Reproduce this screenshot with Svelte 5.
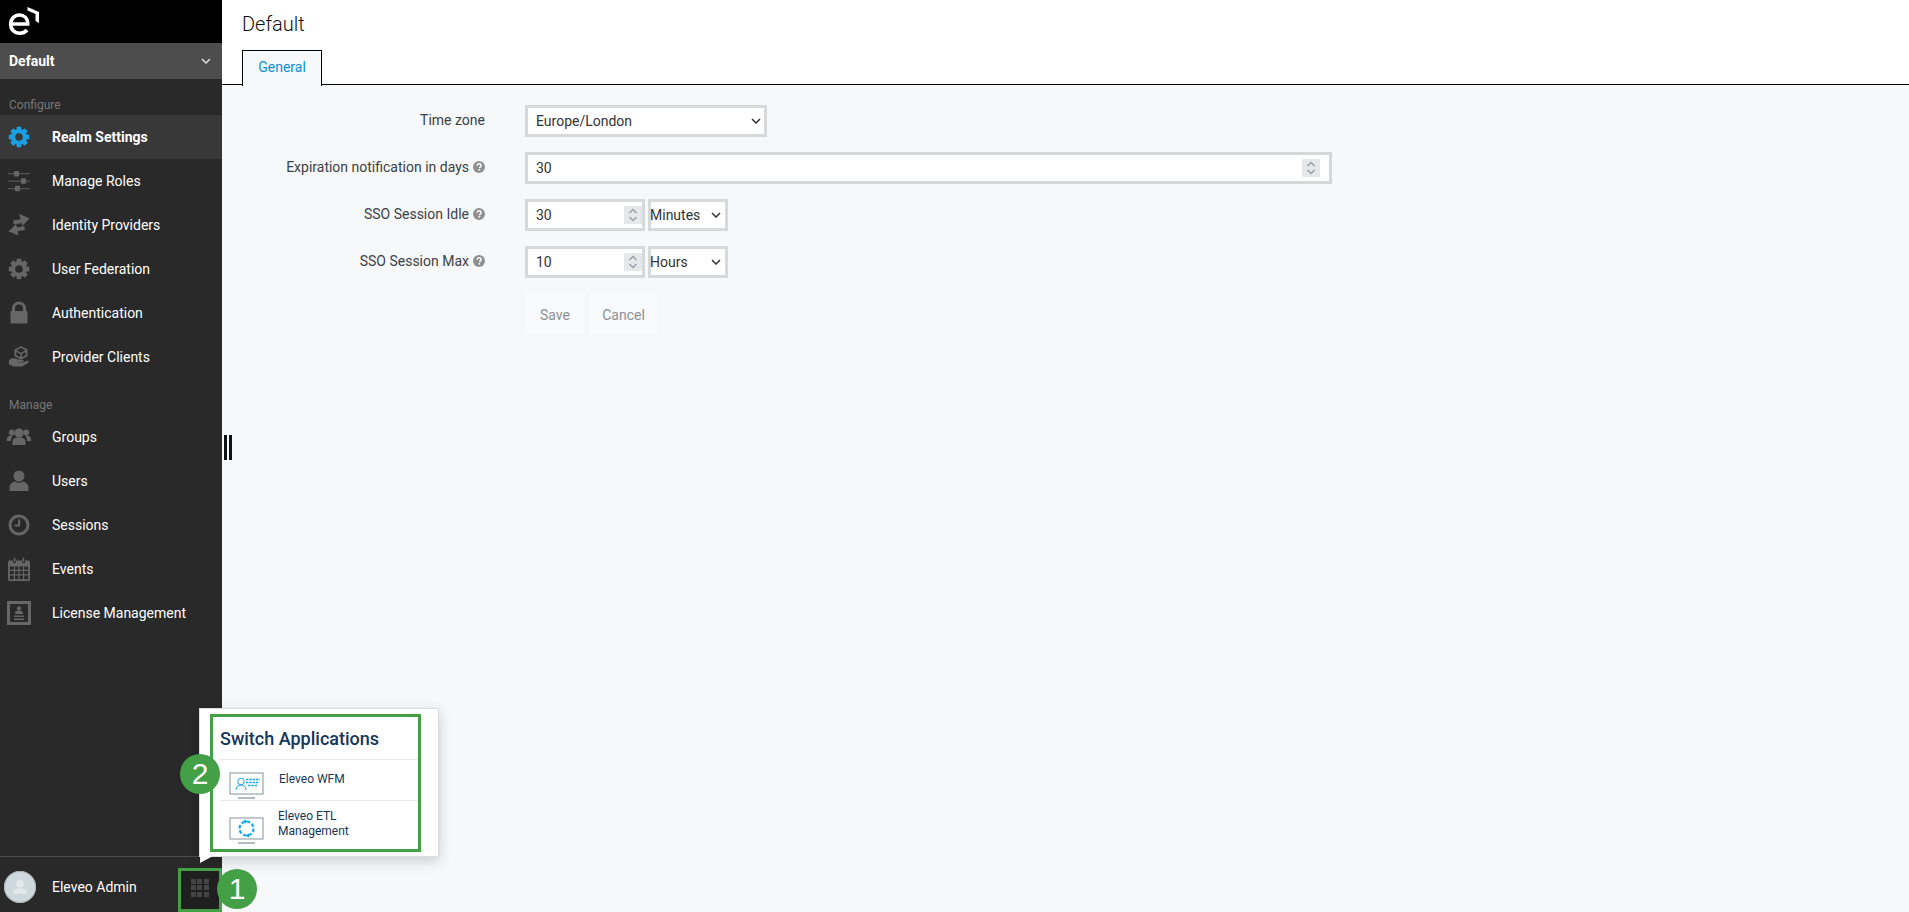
<script lang="ts">
	const gearTeeth = [0, 45, 90, 135, 180, 225, 270, 315];

	const configureItems = [
		{ label: 'Realm Settings', icon: 'gear', active: true },
		{ label: 'Manage Roles', icon: 'sliders' },
		{ label: 'Identity Providers', icon: 'arrows' },
		{ label: 'User Federation', icon: 'gear' },
		{ label: 'Authentication', icon: 'lock' },
		{ label: 'Provider Clients', icon: 'box' }
	];

	const manageItems = [
		{ label: 'Groups', icon: 'group' },
		{ label: 'Users', icon: 'user' },
		{ label: 'Sessions', icon: 'clock' },
		{ label: 'Events', icon: 'calendar' },
		{ label: 'License Management', icon: 'license' }
	];
</script>

{#snippet navIcon(name)}
	<svg class="nav-icon" viewBox="0 0 24 24" fill="currentColor">
		{#if name === 'gear'}
			{#each gearTeeth as deg}
				<rect x="9.6" y="1.8" width="4.8" height="5" rx="1" transform="rotate({deg} 12 12)" />
			{/each}
			<circle cx="12" cy="12" r="5.8" fill="none" stroke="currentColor" stroke-width="4" />
		{:else if name === 'sliders'}
			<path d="M1 4h22v1.2H1zM1 11.500h22v1.200H1zM1 19h22v1.200H1z" opacity="0.7" />
			<rect x="7" y="2" width="5" height="5.500" rx="1" />
			<rect x="14" y="9.300" width="5" height="5.500" rx="1" />
			<rect x="8" y="16.800" width="5" height="5.500" rx="1" />
		{:else if name === 'arrows'}
			<path d="M14 1l9.500 6.500-8.500 6V10.500H7V6.500h7.500zM9.500 10.500v3.500h7.500v4h-7.500v4L.5 16.500z" transform="rotate(-10 12 12)" />
		{:else if name === 'lock'}
			<path d="M5 10V7.500a7 7 0 0 1 14 0V10h1.500v12.500h-17V10zM8 10h8V7.500a4 4 0 0 0-8 0z" />
		{:else if name === 'box'}
			<path d="M14 1l6.500 3.500v6.700L14 14.500l-6.500-3.300V4.500zM9.500 5.300l4.500 2.400 4.500-2.400L14 3zM14.800 9v3.300l3.900-2V7zM13.200 9L9.300 7v3.300l3.900 2z" />
			<path d="M2 15c3-2.500 6-2.200 9-.5h4.500c1.500 0 1.500 2.500 0 2.500H11v.6h5l4-1.800c1.700-.5 2.300 1.300 1 2.200l-6 3.500H7l-5-2z" />
		{:else if name === 'group'}
			<circle cx="12" cy="8" r="4.600" />
			<circle cx="4.800" cy="7.500" r="3" />
			<circle cx="19.200" cy="7.500" r="3" />
			<path d="M5.500 20v-3.500c0-2.600 2.500-4 6.500-4s6.500 1.400 6.500 4V20zM0 16v-2c0-2 1.600-3.400 4.500-3.400 1 0 1.500.2 1.500.2-1.300 1-2 2.400-2 5.200zM24 16v-2c0-2-1.600-3.400-4.500-3.400-1 0-1.500.2-1.500.2 1.300 1 2 2.400 2 5.200z" />
		{:else if name === 'user'}
			<circle cx="12" cy="7" r="5.500" />
			<path d="M2.500 22v-3.500c0-3.500 3-5.500 5.500-6 2.500 1.800 5.500 1.800 8 0 2.500.5 5.500 2.500 5.500 6V22z" />
		{:else if name === 'clock'}
			<circle cx="12" cy="12" r="9" fill="none" stroke="currentColor" stroke-width="3" />
			<path d="M11 6.500h2.200v7H7.500v-2H11z" />
		{:else if name === 'calendar'}
			<path d="M2.500 3.500H6v2.500h3V3.500h6v2.500h3V3.500h3.500A1.500 1.500 0 0 1 23 5V22.500a1.500 1.500 0 0 1-1.500 1.500h-19A1.500 1.500 0 0 1 1 22.500V5A1.500 1.500 0 0 1 2.500 3.500zM2.800 9.500v3.200h4v-3.200zM8 9.500v3.200h3.400v-3.200zM12.600 9.500v3.200h3.400v-3.200zM17.200 9.500v3.200h4v-3.200zM2.800 14v3.200h4V14zM8 14v3.200h3.400V14zM12.600 14v3.200h3.400V14zM17.200 14v3.200h4V14zM2.800 18.500v3.700h4v-3.700zM8 18.500v3.700h3.400v-3.700zM12.600 18.500v3.700h3.400v-3.700zM17.200 18.500v3.700h4v-3.700z" fill-rule="evenodd" />
			<rect x="6.800" y="0.500" width="1.600" height="4.800" rx="0.800" />
			<rect x="15.600" y="0.500" width="1.600" height="4.800" rx="0.800" />
		{:else if name === 'license'}
			<path d="M0 0h24v24H0zM3 3v18h18V3z" fill-rule="evenodd" />
			<circle cx="12" cy="7.500" r="2.200" />
			<path d="M8 13v-1.500c0-1 1.500-1.800 4-1.800s4 .8 4 1.800V13zM7 14.500h10V16H7zM7 17.500h10V19H7z" />
		{/if}
	</svg>
{/snippet}

{#snippet helpIcon()}
	<svg class="help" viewBox="0 0 12 12">
		<circle cx="6" cy="6" r="6" fill="#8f8f8f" />
		<path d="M4 4.700C4.100 3.500 5 2.800 6 2.800s2.100.7 2.100 1.900c0 1.400-1.600 1.400-1.600 2.500" fill="none" stroke="#fff" stroke-width="1.400" />
		<rect x="5.500" y="8.100" width="1.700" height="1.500" fill="#fff" />
	</svg>
{/snippet}

{#snippet chevron()}
	<svg class="chevron" viewBox="0 0 10 6">
		<path d="M1 1l4 4 4-4" fill="none" stroke="#333" stroke-width="1.500" />
	</svg>
{/snippet}

{#snippet stepper()}
	<span class="stepper">
		<svg viewBox="0 0 12 16" width="12" height="16">
			<path d="M2.500 6L6 2.500 9.500 6M2.500 10L6 13.500 9.500 10" fill="none" stroke="#9a9da3" stroke-width="1.400" />
		</svg>
	</span>
{/snippet}

<div class="page">
	<aside class="sidebar">
		<div class="logo-bar">
			<svg class="logo" viewBox="0 0 40 36" width="40" height="36">
				<path d="M9.500 24h17.200c0-5.800-3.800-9-8.200-9-4.900 0-8.800 3.900-8.800 9.200s3.900 9 9 9c3.200 0 5.600-1.200 7.300-3.200" fill="none" stroke="#fff" stroke-width="3.600" />
				<path d="M26.500 7l11.500 5v11l-3.500-2v-7L26.500 10.500z" fill="#fff" />
			</svg>
		</div>
		<div class="realm-select">
			<span>Default</span>
			<svg viewBox="0 0 10 6" width="10" height="6">
				<path d="M1 1l4 4 4-4" fill="none" stroke="#ddd" stroke-width="1.500" />
			</svg>
		</div>

		<div class="nav-title first">Configure</div>
		<nav>
			{#each configureItems as item}
				<div class="nav-item" class:active={item.active}>
					<span class="icon-slot">{@render navIcon(item.icon)}</span>
					<span>{item.label}</span>
				</div>
			{/each}
		</nav>

		<div class="nav-title second">Manage</div>
		<nav>
			{#each manageItems as item}
				<div class="nav-item">
					<span class="icon-slot">{@render navIcon(item.icon)}</span>
					<span>{item.label}</span>
				</div>
			{/each}
		</nav>

		<div class="user-bar">
			<div class="avatar">
				<svg viewBox="0 0 24 24" width="20" height="20" fill="#e4e9ec">
					<circle cx="12" cy="8" r="4.500" />
					<path d="M4 20v-2c0-3 3-4.500 8-4.500s8 1.500 8 4.500v2z" />
				</svg>
			</div>
			<span class="user-name">Eleveo Admin</span>
			<div class="grid-button">
				<div class="dots">
					{#each Array(9) as _}
						<i></i>
					{/each}
				</div>
			</div>
		</div>
	</aside>

	<main class="content">
		<header class="content-head">
			<h1>Default</h1>
			<div class="tabs">
				<div class="tab">General</div>
			</div>
		</header>

		<form class="settings">
			<label for="tz">Time zone</label>
			<div class="field">
				<div class="box w-242">
					<span id="tz" class="value">Europe/London</span>
					{@render chevron()}
				</div>
			</div>

			<label for="exp">Expiration notification in days {@render helpIcon()}</label>
			<div class="field">
				<div class="box wide">
					<span id="exp" class="value">30</span>
					{@render stepper()}
				</div>
			</div>

			<label for="idle">SSO Session Idle {@render helpIcon()}</label>
			<div class="field">
				<div class="box w-120">
					<span id="idle" class="value">30</span>
					{@render stepper()}
				</div>
				<div class="box w-80 unit">
					<span class="value">Minutes</span>
					{@render chevron()}
				</div>
			</div>

			<label for="max">SSO Session Max {@render helpIcon()}</label>
			<div class="field">
				<div class="box w-120">
					<span id="max" class="value">10</span>
					{@render stepper()}
				</div>
				<div class="box w-80 unit">
					<span class="value">Hours</span>
					{@render chevron()}
				</div>
			</div>

			<div class="actions">
				<button type="button" class="save">Save</button>
				<button type="button" class="cancel">Cancel</button>
			</div>
		</form>
	</main>

	<div class="resize-handle"></div>

	<div class="popup">
		<div class="popup-inner">
			<h2>Switch Applications</h2>
			<div class="app-row wfm">
				<svg class="monitor" viewBox="0 0 36 28" width="36" height="28">
					<rect x="1" y="1" width="33" height="21" fill="#fff" stroke="#9aa5ab" stroke-width="1.200" />
					<path d="M9 26h17" stroke="#9aa5ab" stroke-width="1.500" />
					<circle cx="12" cy="9.500" r="3.300" fill="none" stroke="#19a7e8" stroke-width="1" />
					<path d="M7 18c.5-3.500 2-5 5-5s4.500 1.500 5 5" fill="none" stroke="#19a7e8" stroke-width="1" />
					<path d="M17 7.500h14M17 10.500h13M19 13.500h9" stroke="#19a7e8" stroke-width="1.300" stroke-dasharray="2.500 0.800" />
				</svg>
				<span>Eleveo WFM</span>
			</div>
			<div class="app-row etl">
				<svg class="monitor" viewBox="0 0 36 28" width="36" height="28">
					<rect x="1" y="1" width="33" height="21" fill="#fff" stroke="#9aa5ab" stroke-width="1.200" />
					<path d="M9 26h17" stroke="#9aa5ab" stroke-width="1.500" />
					<circle cx="17.500" cy="11.500" r="7" fill="none" stroke="#19a7e8" stroke-width="2.200" stroke-dasharray="3.500 2" />
					<path d="M15 2.500l4 2-4 2zM20 16.500l-4 2 4 2z" fill="#19a7e8" />
				</svg>
				<span>Eleveo ETL<br />Management</span>
			</div>
		</div>
		<div class="popup-arrow"></div>
	</div>

	<div class="marker marker-grid"></div>
	<div class="badge badge-one">1</div>
	<div class="badge badge-two">2</div>
</div>

<style>
	:global(body) {
		font-family: Roboto, 'Liberation Sans', sans-serif;
		overflow: hidden;
	}

	.page {
		position: relative;
		display: flex;
		height: 912px;
		background: #f7f8fa;
		color: #333;
	}

	.sidebar {
		width: 222px;
		flex: none;
		display: flex;
		flex-direction: column;
		background: #292929;
		color: #fff;
		font-size: 14px;
	}

	.logo-bar {
		height: 43px;
		background: #000;
		overflow: hidden;
	}

	.logo {
		display: block;
		margin-left: 1px;
	}

	.realm-select {
		height: 36px;
		display: flex;
		align-items: center;
		justify-content: space-between;
		padding: 0 11px 0 9px;
		background: #4d4d4d;
		font-weight: 700;
	}

	.nav-title {
		padding-left: 9px;
		font-size: 12px;
		line-height: 14px;
		color: #777;
	}

	.nav-title.first {
		margin-top: 19px;
		margin-bottom: 3px;
	}

	.nav-title.second {
		margin-top: 19px;
		margin-bottom: 3px;
	}

	.nav-item {
		height: 44px;
		display: flex;
		align-items: center;
		color: #fff;
	}

	.nav-item.active {
		background: #383838;
		font-weight: 700;
	}

	.icon-slot {
		width: 52px;
		flex: none;
		display: flex;
		padding-left: 7px;
		box-sizing: border-box;
		color: #666;
	}

	.active .icon-slot {
		color: #1b9fe0;
	}

	.nav-icon {
		width: 24px;
		height: 24px;
	}

	.user-bar {
		margin-top: auto;
		height: 56px;
		box-sizing: border-box;
		display: flex;
		align-items: center;
		border-top: 1px solid #4a4a4a;
		padding: 5px 0 0 4px;
	}

	.avatar {
		width: 32px;
		height: 32px;
		flex: none;
		display: flex;
		align-items: center;
		justify-content: center;
		border-radius: 50%;
		background: #cfd8dc;
		box-shadow: inset 0 0 0 1px #aab2b6;
	}

	.user-name {
		margin-left: 16px;
		font-size: 14px;
	}

	.grid-button {
		margin-left: auto;
		align-self: flex-end;
		width: 44px;
		height: 44px;
		display: flex;
		align-items: center;
		justify-content: center;
		background: #1f1f1f;
	}

	.dots {
		display: grid;
		grid-template-columns: repeat(3, 5px);
		gap: 1.500px;
		margin-right: 1px;
		margin-bottom: 5px;
	}

	.dots i {
		display: block;
		width: 5px;
		height: 5px;
		background: #444;
	}

	.content {
		flex: 1;
		min-width: 0;
	}

	.content-head {
		height: 84px;
		background: #fff;
		border-bottom: 1px solid #000;
		box-sizing: content-box;
		padding-left: 20px;
		position: relative;
	}

	h1 {
		margin: 0;
		padding-top: 11px;
		font-size: 20px;
		line-height: 26px;
		font-weight: 300;
		color: #111;
	}

	.tabs {
		display: flex;
		margin-top: 13px;
	}

	.tab {
		width: 78px;
		border: 1px solid #000;
		border-bottom: 0;
		background: #f7f8fa;
		color: #0d8fd6;
		font-size: 14px;
		line-height: 33px;
		text-align: center;
		position: relative;
		z-index: 1;
		margin-bottom: -1px;
		height: 35px;
	}

	.settings {
		display: grid;
		grid-template-columns: 263px 1fr;
		column-gap: 40px;
		row-gap: 15px;
		padding-top: 20px;
		font-size: 14px;
	}

	label {
		height: 32px;
		display: flex;
		align-items: center;
		justify-content: flex-end;
		gap: 4px;
		padding-bottom: 3px;
		box-sizing: border-box;
		color: #3a3f45;
	}

	.help {
		width: 12px;
		height: 12px;
		flex: none;
	}

	.field {
		display: flex;
		gap: 3px;
	}

	.box {
		height: 32px;
		box-sizing: border-box;
		display: flex;
		align-items: center;
		justify-content: space-between;
		border: 3px solid #d6d8da;
		background: #fff;
		padding: 0 8px;
		color: #333;
	}

	.w-242 {
		width: 242px;
		padding-right: 3px;
	}

	.wide {
		width: 807px;
		padding-right: 9px;
	}

	.w-120 {
		width: 120px;
		padding-right: 0;
	}

	.w-80 {
		width: 80px;
	}

	.unit {
		padding-left: 0;
		padding-right: 4px;
	}

	.unit .value {
		margin-left: -1px;
	}

	.value {
		line-height: 1;
	}

	.chevron {
		width: 10px;
		height: 6px;
		flex: none;
	}

	.stepper {
		width: 18px;
		height: 18px;
		display: flex;
		align-items: center;
		justify-content: center;
		background: #e6e8ec;
	}

	.actions {
		grid-column: 2;
		display: flex;
		gap: 5px;
		margin-top: 0;
	}

	button {
		height: 42px;
		border: 0;
		background: #f9fafb;
		color: #8d9094;
		font: inherit;
		padding: 2px 0 0;
	}

	.save {
		width: 60px;
	}

	.cancel {
		width: 67px;
	}

	.resize-handle {
		position: absolute;
		left: 224px;
		top: 435px;
		width: 2px;
		height: 25px;
		border-left: 3px solid #111;
		border-right: 3px solid #111;
	}

	.popup {
		position: absolute;
		left: 199px;
		top: 708px;
		width: 240px;
		height: 149px;
		box-sizing: border-box;
		padding: 5px 0 0 10px;
		background: #fff;
		border: 1px solid #dcdcdc;
		box-shadow: 0 4px 12px rgba(0, 0, 0, 0.18);
	}

	.popup-inner {
		width: 211px;
		height: 138px;
		box-sizing: border-box;
		border: 3px solid #43a047;
		padding: 0 0 0 7px;
		color: #14365a;
	}

	.popup-arrow {
		position: absolute;
		left: 0;
		top: 147px;
		width: 0;
		height: 0;
		border-top: 7px solid #fff;
		border-right: 13px solid transparent;
	}

	h2 {
		margin: 0;
		height: 42px;
		font-size: 18px;
		line-height: 44px;
		font-weight: 500;
		color: #14365a;
		white-space: nowrap;
	}

	.app-row {
		display: flex;
		align-items: center;
		border-top: 1px solid #e8e8e8;
		font-size: 12px;
		line-height: 15px;
	}

	.wfm {
		height: 40px;
	}

	.etl {
		height: 49px;
	}

	.monitor {
		flex: none;
		margin-left: 9px;
		margin-right: 14px;
	}

	.wfm .monitor {
		margin-top: 11px;
	}

	.etl .monitor {
		margin-top: 10px;
	}

	.wfm span {
		margin-bottom: 2px;
	}

	.etl span {
		margin-left: -1px;
		margin-bottom: 4px;
	}

	.marker {
		position: absolute;
		box-sizing: border-box;
		border: 3px solid #43a047;
	}

	.marker-grid {
		left: 178px;
		top: 868px;
		width: 44px;
		height: 44px;
	}

	.badge {
		position: absolute;
		width: 40px;
		height: 40px;
		border-radius: 50%;
		background: #43a047;
		color: #fff;
		font-size: 30px;
		line-height: 40px;
		text-align: center;
		font-family: 'Liberation Sans', Arial, sans-serif;
	}

	.badge-one {
		left: 217px;
		top: 869px;
	}

	.badge-two {
		left: 180px;
		top: 754px;
	}
</style>
